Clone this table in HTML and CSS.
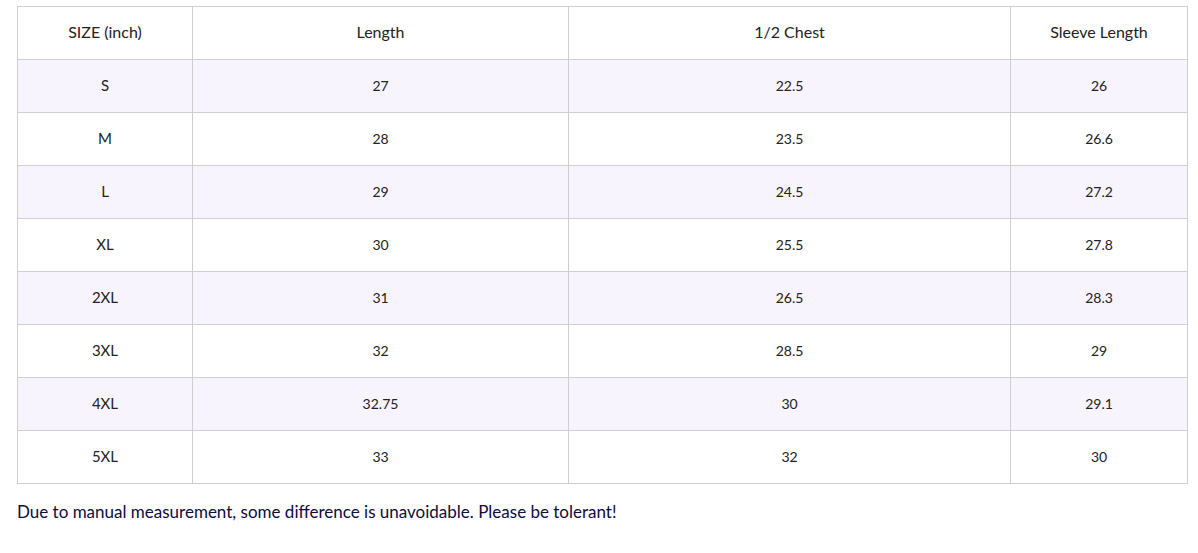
FILE: index.html
```html
<!DOCTYPE html>
<html>
<head>
<meta charset="utf-8">
<link rel="stylesheet" href="styles.css">
</head>
<body>
<div class="wrap">
<table class="size-table">
  <colgroup>
    <col class="c1"><col class="c2"><col class="c3"><col class="c4">
  </colgroup>
  <thead>
    <tr><th>SIZE (inch)</th><th>Length</th><th>1/2 Chest</th><th>Sleeve Length</th></tr>
  </thead>
  <tbody>
    <tr><td class="sz">S</td><td>27</td><td>22.5</td><td>26</td></tr>
    <tr><td class="sz">M</td><td>28</td><td>23.5</td><td>26.6</td></tr>
    <tr><td class="sz">L</td><td>29</td><td>24.5</td><td>27.2</td></tr>
    <tr><td class="sz">XL</td><td>30</td><td>25.5</td><td>27.8</td></tr>
    <tr><td class="sz">2XL</td><td>31</td><td>26.5</td><td>28.3</td></tr>
    <tr><td class="sz">3XL</td><td>32</td><td>28.5</td><td>29</td></tr>
    <tr><td class="sz">4XL</td><td>32.75</td><td>30</td><td>29.1</td></tr>
    <tr><td class="sz">5XL</td><td>33</td><td>32</td><td>30</td></tr>
  </tbody>
</table>
<p class="note">Due to manual measurement, some difference is unavoidable. Please be tolerant!</p>
</div>
</body>
</html>
```

FILE: styles.css
```css
html, body {
  margin: 0;
  padding: 0;
  background: #ffffff;
}
.wrap {
  padding: 6px 0 0 17px;
}
.size-table {
  border-collapse: collapse;
  table-layout: fixed;
  width: 1170px;
  font-family: Lato, "Open Sans", sans-serif;
  color: #222222;
}
.c1 { width: 175px; }
.c2 { width: 376px; }
.c3 { width: 442px; }
.c4 { width: 177px; }
.size-table th,
.size-table td {
  border: 1px solid #cfcfcf;
  height: 50px;
  padding: 0 0 2px 0;
  text-align: center;
  vertical-align: middle;
}
.size-table th {
  font-weight: normal;
  font-size: 16px;
  height: 48px;
  padding-bottom: 4px;
}
.size-table td {
  font-size: 14px;
}
.size-table td.sz {
  font-size: 15px;
}
.size-table tbody tr:nth-child(odd) {
  background: #f8f4fe;
}
.note {
  margin: 17px 0 0 0;
  font-family: Lato, "Noto Sans", sans-serif;
  font-size: 17px;
  color: #0e0b3d;
}
```
